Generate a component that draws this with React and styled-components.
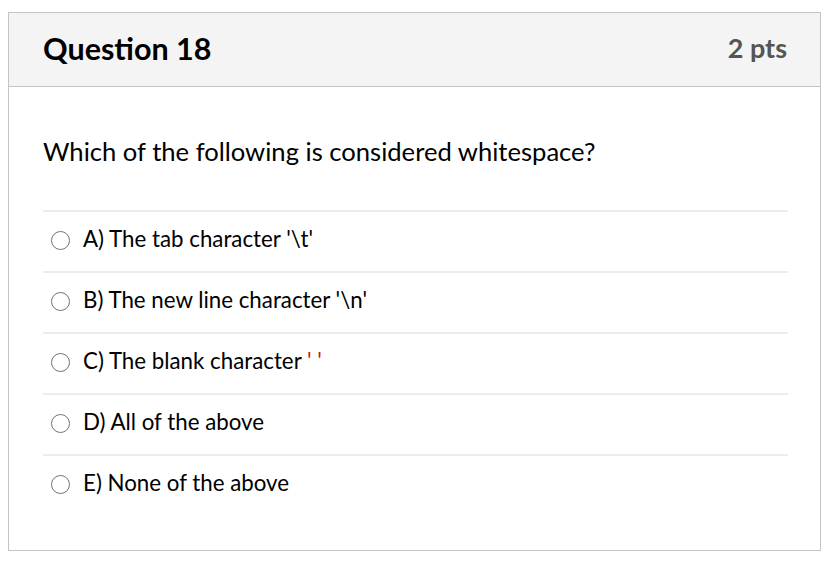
import React from "react";
import styled, { createGlobalStyle } from "styled-components";

const GlobalStyle = createGlobalStyle`
    body {
        margin: 0;
        background: #ffffff;
        font-family: Lato, "Noto Sans", sans-serif;
        color: #000;
    }
`;

const Page = styled.div`
    padding: 12px 17px 0 8px;
`;

const Card = styled.div`
    border: 1px solid #c4c4c4;
    height: 539px;
    box-sizing: border-box;
`;

const Header = styled.div`
    display: flex;
    justify-content: space-between;
    align-items: center;
    height: 74px;
    box-sizing: border-box;
    padding: 0 33px 4px 34px;
    background: #f4f4f4;
    border-bottom: 1px solid #c4c4c4;
`;

const Title = styled.h2`
    margin: 0;
    font-size: 30.5px;
    font-weight: 700;
    color: #000;
`;

const Points = styled.div`
    font-size: 27px;
    font-weight: 700;
    color: #555;
`;

const Body = styled.div`
    padding: 49px 32px 0 34px;
`;

const QuestionText = styled.p`
    margin: 0 0 44px;
    font-size: 25.6px;
    line-height: 30px;
`;

const Answers = styled.div`
    display: flex;
    flex-direction: column;
`;

const Answer = styled.label`
    display: flex;
    align-items: center;
    gap: 13px;
    height: 61px;
    box-sizing: border-box;
    padding: 0 0 2px 8px;
    border-top: 2px solid #ececec;
    font-size: 22.3px;
    color: #000;
`;

const AnswerText = styled.span`
    padding-bottom: 4px;
`;

const Radio = styled.span`
    width: 17px;
    height: 17px;
    border: 1.5px solid #737373;
    border-radius: 50%;
    flex-shrink: 0;
`;

const Quote = styled.span`
    color: #c21b1b;
`;

const answers = [
    "A) The tab character '\\t'",
    "B) The new line character '\\n'",
    <>
        C) The blank character <Quote>' '</Quote>
    </>,
    "D) All of the above",
    "E) None of the above",
];

export default function App() {
    return (
        <Page>
            <GlobalStyle />
            <Card>
                <Header>
                    <Title>Question 18</Title>
                    <Points>2 pts</Points>
                </Header>
                <Body>
                    <QuestionText>
                        Which of the following is considered whitespace?
                    </QuestionText>
                    <Answers>
                        {answers.map((a, i) => (
                            <Answer key={i}>
                                <Radio />
                                <AnswerText>{a}</AnswerText>
                            </Answer>
                        ))}
                    </Answers>
                </Body>
            </Card>
        </Page>
    );
}
